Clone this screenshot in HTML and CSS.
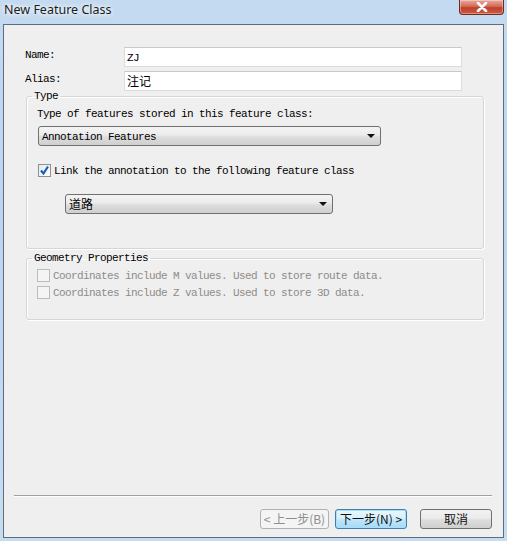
FILE: index.html
```html
<!DOCTYPE html>
<html>
<head>
<meta charset="utf-8">
<link rel="stylesheet" href="styles.css">
</head>
<body>
<div class="window">
  <div class="titlebar">
    <span class="title">New Feature Class</span>
    <span class="close"><svg width="14" height="10" viewBox="0 0 14 10"><path d="M3 1 L11 9 M11 1 L3 9" stroke="#fff" stroke-width="2.6" stroke-linecap="round"/></svg></span>
  </div>
  <div class="client">
    <div class="fields">
      <label class="lbl">Name:</label>
      <div class="input">ZJ</div>
      <label class="lbl">Alias:</label>
      <div class="input cjk">注记</div>
    </div>
    <fieldset class="group type">
      <legend>Type</legend>
      <div class="text t1">Type of features stored in this feature class:</div>
      <div class="select sel1"><span class="mono">Annotation Features</span><span class="arrow"></span></div>
      <div class="check-row r1">
        <span class="cb checked"><svg width="11" height="11" viewBox="0 0 11 11"><path d="M2 5.5 L4.5 8.5 L9 1.5" fill="none" stroke="#1f5fa8" stroke-width="2.2"/></svg></span>
        <span class="text">Link the annotation to the following feature class</span>
      </div>
      <div class="select sel2"><span class="cjk">道路</span><span class="arrow"></span></div>
    </fieldset>
    <fieldset class="group geom">
      <legend>Geometry Properties</legend>
      <div class="check-row disabled r2">
        <span class="cb"></span>
        <span class="text">Coordinates include M values. Used to store route data.</span>
      </div>
      <div class="check-row disabled r3">
        <span class="cb"></span>
        <span class="text">Coordinates include Z values. Used to store 3D data.</span>
      </div>
    </fieldset>
    <div class="separator"></div>
    <div class="buttons">
      <div class="btn disabled b1">&lt; 上一步(B)</div>
      <div class="btn focused b2">下一步(N) &gt;</div>
      <div class="btn b3">取消</div>
    </div>
  </div>
</div>
</body>
</html>
```
FILE: styles.css
```css
* { box-sizing: border-box; }
html, body { margin: 0; padding: 0; }
body { width: 507px; height: 541px; overflow: hidden; background: #bdd6ee; }

.window {
  width: 507px;
  height: 541px;
  background: linear-gradient(180deg, #c3daf0 0%, #bcd5ee 40%, #c6dcf1 100%);
  padding: 0 3px 3px 3px;
  display: flex;
  flex-direction: column;
}

.titlebar {
  height: 24px;
  display: flex;
  justify-content: space-between;
  align-items: flex-start;
  flex: none;
}
.title {
  font-family: "Noto Sans", "Open Sans", sans-serif;
  font-size: 12.5px;
  line-height: 18px;
  color: #1c1c1c;
  padding: 1px 0 0 1px;
  text-shadow: 0 0 6px #fff, 0 0 4px #fff;
}
.close {
  width: 45px;
  height: 15px;
  margin-right: 0;
  background: linear-gradient(180deg, #e9a99c 0%, #d56b5a 45%, #c0402c 55%, #cf5a40 100%);
  border: 1px solid #6d2c22;
  border-top: none;
  border-radius: 0 0 4px 4px;
  display: flex;
  align-items: center;
  justify-content: center;
  box-shadow: inset 0 0 0 1px rgba(255,255,255,0.35);
}
.close svg { display: block; }

.client {
  flex: 1;
  border: 1px solid #5d6e80;
  background: #f0efef;
  padding: 22px 0 0 21px;
  display: flex;
  flex-direction: column;
  font-family: "Liberation Mono", "DejaVu Sans Mono", monospace;
  font-size: 11px;
  letter-spacing: -0.6px;
  color: #000;
}

.mono, .text, .lbl, legend {
  font-family: "Liberation Mono", "DejaVu Sans Mono", monospace;
  font-size: 11px;
  letter-spacing: -0.6px;
}
.cjk {
  font-family: "Noto Sans CJK SC", sans-serif;
  font-size: 12px;
  letter-spacing: 0;
}

.fields {
  display: grid;
  grid-template-columns: 99px 338px;
  row-gap: 4px;
}
.lbl {
  line-height: 12px;
  padding-top: 2px;
  align-self: start;
}
.input {
  height: 20px;
  background: #fff;
  border: 1px solid #dcdcdc;
  border-top-color: #c9c9c9;
  padding: 0 0 0 2px;
  line-height: 20px;
}
.input.cjk { line-height: 17px; }

.group {
  margin: 0 0 0 1px;
  width: 458px;
  border: 1px solid #d6d6d6;
  border-radius: 3px;
  box-shadow: inset 1px 1px 0 #fff, 1px 1px 0 #fff;
  padding: 0 0 0 10px;
  min-width: 0;
}
.group legend {
  line-height: 10px;
  padding: 0 2px;
  margin-left: -5px;
}
.type { padding-bottom: 34px; }
.geom { margin-top: 4px; padding-bottom: 20px; }

.text { line-height: 12px; white-space: nowrap; }
.t1 { margin-top: 7px; }

.select {
  height: 20px;
  border: 1px solid #707070;
  border-radius: 3px;
  background: linear-gradient(180deg, #f4f4f4 0%, #ebebeb 45%, #dddddd 55%, #cfcfcf 100%);
  display: flex;
  align-items: center;
  justify-content: space-between;
  padding: 0 3px 0 3px;
}
.sel1 { margin-top: 6px; margin-left: 1px; width: 343px; }
.sel1 .mono { padding-top: 1px; }
.sel2 { margin-top: 17px; margin-left: 28px; width: 268px; }
.sel2 .cjk { line-height: 18px; }
.arrow {
  width: 0; height: 0;
  border-left: 4px solid transparent;
  border-right: 4px solid transparent;
  border-top: 4px solid #111;
  margin-right: 2px;
}

.check-row {
  display: flex;
  align-items: center;
  gap: 3px;
  height: 13px;
}
.r1 { margin-top: 18px; margin-left: 1px; }
.r2 { margin-top: 6px; }
.r3 { margin-top: 4px; }
.cb {
  width: 13px; height: 13px;
  border: 1px solid #8e8f8f;
  background: linear-gradient(135deg, #e2e2e2, #ffffff);
  display: flex;
  align-items: center;
  justify-content: center;
  flex: none;
}
.cb.checked { background: linear-gradient(135deg, #dfe9f5, #ffffff); }
.cb svg { display: block; }
.disabled .cb { border-color: #bcbcbc; background: #f4f4f4; }
.check-row.disabled .text { color: #8c8c8c; }

.separator {
  margin-top: auto;
  margin-left: -11px;
  width: 478px;
  height: 2px;
  border-top: 1px solid #a0a0a0;
  border-bottom: 1px solid #ffffff;
}
.buttons {
  display: flex;
  justify-content: flex-end;
  padding-right: 11px;
  margin-top: 12px;
  margin-bottom: 8px;
  gap: 6px;
}
.btn {
  height: 20px;
  width: 72px;
  border: 1px solid #707070;
  border-radius: 3px;
  background: linear-gradient(180deg, #f2f2f2 0%, #ebebeb 45%, #dddddd 55%, #cfcfcf 100%);
  font-family: "Noto Sans CJK SC", sans-serif;
  font-size: 12px;
  letter-spacing: 0;
  line-height: 18px;
  text-align: center;
  color: #111;
}
.btn.b1 { width: 69px; }
.btn.b3 { margin-left: 7px; }
.btn.disabled {
  border-color: #adb2b5;
  background: #f4f4f4;
  color: #8d8d8d;
}
.btn.focused {
  border-color: #3c7fb1;
  background: linear-gradient(180deg, #eaf6fd 0%, #d9f0fc 45%, #bee6fd 55%, #a7d9f5 100%);
  box-shadow: inset 0 0 0 1px #a8e0f8;
}
```
